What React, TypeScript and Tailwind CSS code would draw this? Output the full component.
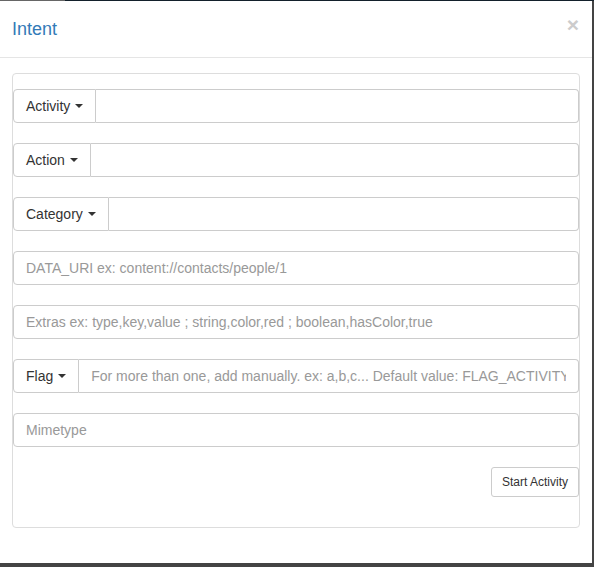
import React from 'react';

const font = { fontFamily: '"Liberation Sans", Arial, sans-serif' };

function Caret() {
  return <span className="ml-[5px] inline-block h-0 w-0 border-x-[4px] border-t-[4px] border-x-transparent border-t-[#333] align-middle" />;
}

function DropGroup({ label, placeholder }: { label: string; placeholder?: string }) {
  return (
    <div className="flex h-[34px]">
      <button className="flex items-center rounded-l-[4px] border border-[#ccc] bg-white px-3 text-[14px] text-[#333]">
        {label}
        <Caret />
      </button>
      <input
        className="min-w-0 flex-1 rounded-r-[4px] border border-l-0 border-[#ccc] px-3 text-[14px] text-[#555] placeholder:text-[#999] outline-none"
        placeholder={placeholder}
      />
    </div>
  );
}

function Field({ placeholder }: { placeholder: string }) {
  return (
    <input
      className="h-[34px] w-full rounded-[4px] border border-[#ccc] px-3 text-[14px] text-[#555] placeholder:text-[#999] outline-none"
      placeholder={placeholder}
    />
  );
}

export default function App() {
  return (
    <div className="h-[567px] w-[594px] overflow-hidden bg-[#444]" style={font}>
      <div className="flex">
        <div className="h-px w-[65px] bg-[#666]" />
        <div className="h-px flex-1 bg-[#13202b]" />
      </div>
      <div className="h-[562px] w-[592px] bg-white">
        <div className="flex h-[57px] items-center justify-between border-b border-[#e5e5e5] pl-3 pr-[13px]">
          <h4 className="text-[18px] text-[#337ab7]">Intent</h4>
          <span className="-mt-[9px] text-[21px] font-bold leading-none text-[#ccc]">×</span>
        </div>
        <div className="px-3 pt-[15px]">
          <div className="flex h-[455px] flex-col gap-5 rounded-[4px] border border-[#ddd] pt-[15px]">
            <DropGroup label="Activity" />
            <DropGroup label="Action" />
            <DropGroup label="Category" />
            <Field placeholder="DATA_URI ex: content://contacts/people/1" />
            <Field placeholder="Extras ex: type,key,value ; string,color,red ; boolean,hasColor,true" />
            <DropGroup label="Flag" placeholder="For more than one, add manually. ex: a,b,c... Default value: FLAG_ACTIVITY_NEW_TASK" />
            <Field placeholder="Mimetype" />
            <div className="flex justify-end">
              <button className="h-[30px] rounded-[3px] border border-[#ccc] bg-white px-[10px] text-[12px] text-[#333]">
                Start Activity
              </button>
            </div>
          </div>
        </div>
      </div>
    </div>
  );
}
